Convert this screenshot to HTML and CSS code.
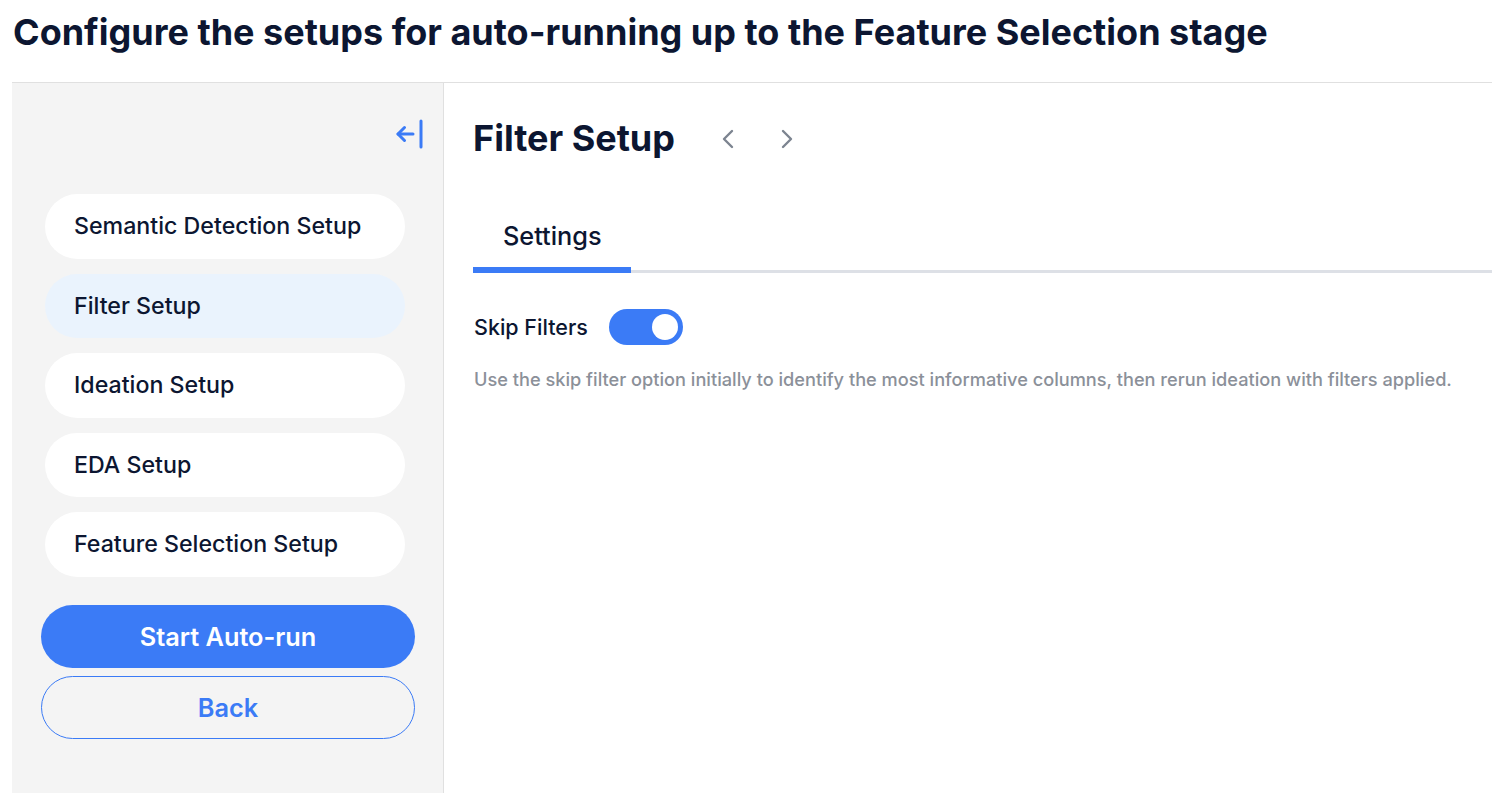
FILE: index.html
```html
<!DOCTYPE html>
<html>
<head>
<meta charset="utf-8">
<link rel="stylesheet" href="styles.css">
</head>
<body>
<h1 class="page-title">Configure the setups for auto-running up to the Feature Selection stage</h1>
<div class="layout">
  <aside class="sidebar">
    <div class="collapse-row">
      <svg class="collapse-icon" width="32" height="32" viewBox="0 0 32 32" fill="none" stroke="#3b7bf6" stroke-width="3" stroke-linecap="round" stroke-linejoin="round">
        <path d="M4 16 H19"/>
        <path d="M10.5 9.5 L4 16 L10.5 22.5"/>
        <path d="M27 3 V29"/>
      </svg>
    </div>
    <nav class="steps">
      <div class="step">Semantic Detection Setup</div>
      <div class="step active">Filter Setup</div>
      <div class="step">Ideation Setup</div>
      <div class="step">EDA Setup</div>
      <div class="step">Feature Selection Setup</div>
    </nav>
    <div class="actions">
      <button class="btn btn-primary">Start Auto-run</button>
      <button class="btn btn-outline">Back</button>
    </div>
  </aside>
  <main class="main">
    <div class="main-header">
      <h2 class="section-title">Filter Setup</h2>
      <div class="pager">
        <svg width="24" height="24" viewBox="0 0 24 24" fill="none" stroke="#7c8490" stroke-width="2.4" stroke-linecap="round" stroke-linejoin="round"><path d="M14 4 L6 12 L14 20"/></svg>
        <svg width="24" height="24" viewBox="0 0 24 24" fill="none" stroke="#7c8490" stroke-width="2.4" stroke-linecap="round" stroke-linejoin="round"><path d="M10 4 L18 12 L10 20"/></svg>
      </div>
    </div>
    <div class="tabs">
      <div class="tab active">Settings</div>
    </div>
    <div class="field">
      <span class="field-label">Skip Filters</span>
      <span class="toggle on"><span class="knob"></span></span>
    </div>
    <p class="hint">Use the skip filter option initially to identify the most informative columns, then rerun ideation with filters applied.</p>
  </main>
</div>
</body>
</html>
```
FILE: styles.css
```css
* { box-sizing: border-box; }
html, body { margin: 0; padding: 0; background: #fff; }
body {
  font-family: Inter, "Noto Sans", sans-serif;
  color: #0f172a;
  padding: 0 0 0 12px;
  width: 1492px;
  height: 808px;
  overflow: hidden;
}
.page-title {
  margin: 0;
  height: 82px;
  padding: 11px 0 0 1px;
  font-size: 36px;
  font-weight: 700;
  color: #0c1631;
  line-height: 42px;
}
.layout {
  display: flex;
  border-top: 1px solid #e0e0e0;
  height: 711px;
}
.sidebar {
  width: 432px;
  background: #f4f4f4;
  border-right: 1px solid #e0e0e0;
  display: flex;
  flex-direction: column;
  padding: 0 0 0 29px;
}
.collapse-row {
  display: flex;
  justify-content: flex-end;
  padding: 35px 17px 0 0;
  height: 111px;
}
.steps {
  display: flex;
  flex-direction: column;
  gap: 15px;
  padding-left: 4px;
}
.step {
  width: 360px;
  height: 64.5px;
  border-radius: 33px;
  background: #fff;
  display: flex;
  align-items: center;
  padding-left: 29px;
  font-size: 23.2px;
  font-weight: 450;
  color: #0c1631;
}
.step.active { background: #eaf3fd; }
.actions {
  display: flex;
  flex-direction: column;
  gap: 8px;
  margin-top: 28px;
}
.btn {
  width: 374px;
  height: 63px;
  border-radius: 32px;
  font-family: Inter, sans-serif;
  font-size: 25.3px;
  font-weight: 600;
  cursor: pointer;
}
.btn-primary {
  background: #3b7bf6;
  color: #fff;
  border: none;
}
.btn-outline {
  background: transparent;
  color: #3b7bf6;
  border: 1px solid #3b7bf6;
}
.main {
  flex: 1;
  padding: 0 0 0 29px;
}
.main-header {
  display: flex;
  align-items: center;
  height: 108px;
  padding-top: 2px;
}
.section-title {
  margin: 0;
  font-size: 36px;
  font-weight: 700;
  color: #0c1631;
  line-height: 44px;
}
.pager {
  display: flex;
  gap: 31px;
  margin-left: 43px;
  padding-top: 2px;
}
.tabs {
  display: flex;
  border-bottom: 3px solid #dde0e6;
  height: 82px;
}
.tab {
  font-size: 25.3px;
  font-weight: 500;
  color: #0c1631;
  line-height: 30px;
  padding: 30px 29px 0 30px;
  height: 82px;
  margin-bottom: -3px;
}
.tab.active { border-bottom: 6px solid #3b7bf6; }
.field {
  display: flex;
  align-items: center;
  gap: 21px;
  margin-top: 36px;
  padding-left: 1px;
}
.field-label {
  font-size: 21.5px;
  font-weight: 500;
  color: #0c1631;
}
.toggle {
  width: 74px;
  height: 36px;
  border-radius: 18px;
  background: #3b7bf6;
  display: flex;
  align-items: center;
  padding: 0 5px;
}
.toggle.on { justify-content: flex-end; }
.knob {
  width: 26px;
  height: 26px;
  border-radius: 50%;
  background: #fff;
}
.hint {
  margin: 23px 0 0 1px;
  font-size: 18.2px;
  line-height: 22px;
  font-weight: 500;
  color: #8b9099;
}
```
